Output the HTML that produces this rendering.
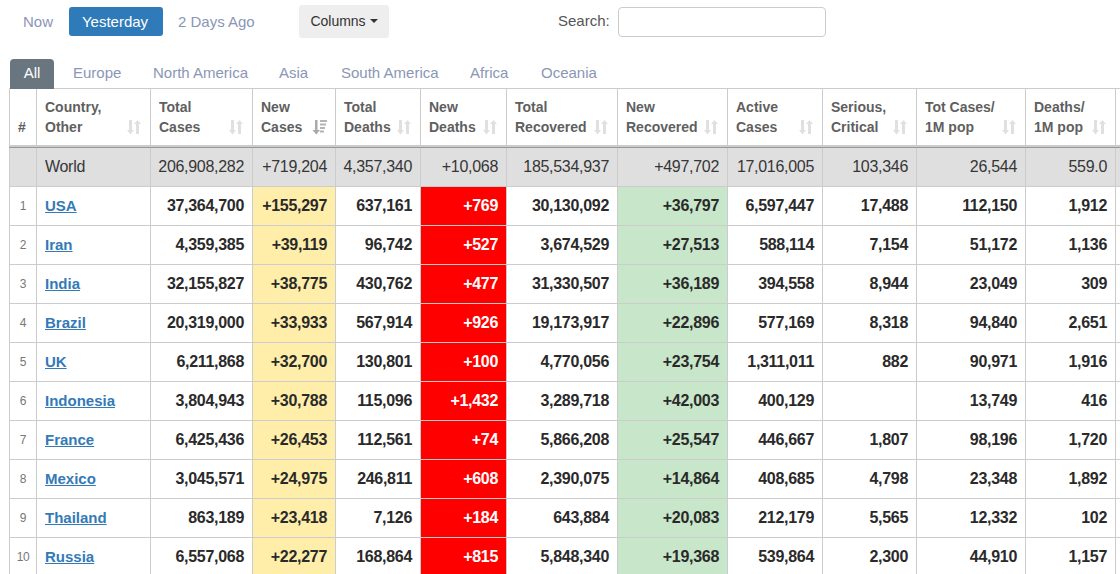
<!DOCTYPE html>
<html><head><meta charset="utf-8">
<style>
*{box-sizing:border-box;}
html,body{margin:0;padding:0;background:#fff;width:1120px;height:574px;overflow:hidden;font-family:"Liberation Sans",sans-serif;}
.abs{position:absolute;}
.nav{font-size:15px;color:#8a96b5;}
#btnY{left:69px;top:7px;width:94px;height:29px;background:#2f7ab8;text-indent:-2px;border-radius:3px;color:#fff;font-size:15px;text-align:center;line-height:29px;}
#now{left:23px;top:7px;line-height:29px;}
#d2{left:178px;top:7px;line-height:29px;}
#cols{left:299px;top:5px;width:90px;height:33px;background:#eee;border-radius:3px;font-size:14px;color:#333;text-align:center;line-height:33px;}
.caret{display:inline-block;width:0;height:0;border-left:4px solid transparent;border-right:4px solid transparent;border-top:4px solid #333;vertical-align:middle;margin-left:4px;margin-top:-2px;}
#slab{left:558px;top:11px;font-size:15px;color:#555;line-height:20px;}
#sinp{left:618px;top:7px;width:208px;height:30px;border:1px solid #ccc;border-radius:4px;}
.tabs{position:absolute;top:59px;left:10px;height:30px;font-size:15px;z-index:2;}
.tab{position:absolute;top:0;height:30px;line-height:28px;color:#8a96b5;white-space:nowrap;}
#tall{left:0;width:44px;background:#69757f;color:#fff;border-radius:4px 4px 0 0;text-align:center;}
table{position:absolute;left:9px;top:88px;width:1196px;border-collapse:collapse;table-layout:fixed;}
th,td{border:1px solid #ccc;padding:0 8px 0 0;}
th{height:58px;font-size:14px;color:#5f5f5f;font-weight:bold;text-align:left;vertical-align:bottom;padding:0 0 8px 8px;line-height:20px;position:relative;background:#fff;}
th.h{border-bottom:3px solid #ccc;}
td{height:39px;font-size:16px;font-weight:bold;color:#2a2a2a;text-align:right;letter-spacing:-0.3px;}
tr.w td{font-weight:normal;background:#dfdfdf;color:#363636;font-size:16px;height:40px;}
td.n{font-size:12px;font-weight:normal;color:#777;text-align:center;padding:0;}
td.c{text-align:left;padding-left:8px;}
td.c a{color:#337ab7;text-decoration:underline;font-size:15px;letter-spacing:0;}
td.y{background:#ffeeaa;}
td.r{background:#ff0000;color:#fff;}
td.g{background:#c8e6c9;}
.si{position:absolute;right:8px;top:31px;width:15px;height:15px;}
</style></head><body>
<div id="now" class="abs nav">Now</div>
<div id="btnY" class="abs">Yesterday</div>
<div id="d2" class="abs nav">2 Days Ago</div>
<div id="cols" class="abs">Columns<span class="caret"></span></div>
<div id="slab" class="abs">Search:</div>
<div id="sinp" class="abs"></div>
<div class="tabs">
<div class="tab" id="tall">All</div>
<div class="tab" style="left:63px">Europe</div>
<div class="tab" style="left:143px">North America</div>
<div class="tab" style="left:269px">Asia</div>
<div class="tab" style="left:331px">South America</div>
<div class="tab" style="left:460px">Africa</div>
<div class="tab" style="left:531px">Oceania</div>
</div>
<table>
<colgroup>
<col style="width:27px"><col style="width:114px"><col style="width:102px"><col style="width:83px"><col style="width:85px"><col style="width:86px"><col style="width:111px"><col style="width:110px"><col style="width:95px"><col style="width:94px"><col style="width:109px"><col style="width:90px"><col style="width:90px">
</colgroup>
<tr>
<th class="h">#</th>
<th class="h">Country,<br>Other<svg class="si" viewBox="0 0 15 15"><path d="M2 0h3v10h2l-3.5 4.5L0 10h2z M9 14V4H7l3.5-4L14 4h-2v10z" fill="#e0e0e0"/></svg></th>
<th class="h">Total<br>Cases<svg class="si" viewBox="0 0 15 15"><path d="M2 0h3v10h2l-3.5 4.5L0 10h2z M9 14V4H7l3.5-4L14 4h-2v10z" fill="#e0e0e0"/></svg></th>
<th class="h">New<br>Cases<svg class="si" viewBox="0 0 15 15"><path d="M3 0h2.5v10h2.5l-3.75 4.5L0.5 10h2.5z" fill="#aaa"/><path d="M8 0h7v2H8z M8 3.5h6v2H8z M8 7h5v2H8z M8 10.5h4v2H8z" fill="#b4b4b4"/></svg></th>
<th class="h">Total<br>Deaths<svg class="si" viewBox="0 0 15 15"><path d="M2 0h3v10h2l-3.5 4.5L0 10h2z M9 14V4H7l3.5-4L14 4h-2v10z" fill="#e0e0e0"/></svg></th>
<th class="h">New<br>Deaths<svg class="si" viewBox="0 0 15 15"><path d="M2 0h3v10h2l-3.5 4.5L0 10h2z M9 14V4H7l3.5-4L14 4h-2v10z" fill="#e0e0e0"/></svg></th>
<th class="h">Total<br>Recovered<svg class="si" viewBox="0 0 15 15"><path d="M2 0h3v10h2l-3.5 4.5L0 10h2z M9 14V4H7l3.5-4L14 4h-2v10z" fill="#e0e0e0"/></svg></th>
<th class="h">New<br>Recovered<svg class="si" viewBox="0 0 15 15"><path d="M2 0h3v10h2l-3.5 4.5L0 10h2z M9 14V4H7l3.5-4L14 4h-2v10z" fill="#e0e0e0"/></svg></th>
<th class="h">Active<br>Cases<svg class="si" viewBox="0 0 15 15"><path d="M2 0h3v10h2l-3.5 4.5L0 10h2z M9 14V4H7l3.5-4L14 4h-2v10z" fill="#e0e0e0"/></svg></th>
<th class="h">Serious,<br>Critical<svg class="si" viewBox="0 0 15 15"><path d="M2 0h3v10h2l-3.5 4.5L0 10h2z M9 14V4H7l3.5-4L14 4h-2v10z" fill="#e0e0e0"/></svg></th>
<th class="h">Tot&nbsp;Cases/<br>1M pop<svg class="si" viewBox="0 0 15 15"><path d="M2 0h3v10h2l-3.5 4.5L0 10h2z M9 14V4H7l3.5-4L14 4h-2v10z" fill="#e0e0e0"/></svg></th>
<th class="h">Deaths/<br>1M pop<svg class="si" viewBox="0 0 15 15"><path d="M2 0h3v10h2l-3.5 4.5L0 10h2z M9 14V4H7l3.5-4L14 4h-2v10z" fill="#e0e0e0"/></svg></th>
<th class="h">Total<br>Tests</th>
</tr>
<tr class="w"><td></td><td class="c">World</td><td>206,908,282</td><td>+719,204</td><td>4,357,340</td><td>+10,068</td><td>185,534,937</td><td>+497,702</td><td>17,016,005</td><td>103,346</td><td>26,544</td><td>559.0</td><td></td></tr>
<tr><td class="n">1</td><td class="c"><a>USA</a></td><td>37,364,700</td><td class="y">+155,297</td><td>637,161</td><td class="r">+769</td><td>30,130,092</td><td class="g">+36,797</td><td>6,597,447</td><td>17,488</td><td>112,150</td><td>1,912</td><td></td></tr>
<tr><td class="n">2</td><td class="c"><a>Iran</a></td><td>4,359,385</td><td class="y">+39,119</td><td>96,742</td><td class="r">+527</td><td>3,674,529</td><td class="g">+27,513</td><td>588,114</td><td>7,154</td><td>51,172</td><td>1,136</td><td></td></tr>
<tr><td class="n">3</td><td class="c"><a>India</a></td><td>32,155,827</td><td class="y">+38,775</td><td>430,762</td><td class="r">+477</td><td>31,330,507</td><td class="g">+36,189</td><td>394,558</td><td>8,944</td><td>23,049</td><td>309</td><td></td></tr>
<tr><td class="n">4</td><td class="c"><a>Brazil</a></td><td>20,319,000</td><td class="y">+33,933</td><td>567,914</td><td class="r">+926</td><td>19,173,917</td><td class="g">+22,896</td><td>577,169</td><td>8,318</td><td>94,840</td><td>2,651</td><td></td></tr>
<tr><td class="n">5</td><td class="c"><a>UK</a></td><td>6,211,868</td><td class="y">+32,700</td><td>130,801</td><td class="r">+100</td><td>4,770,056</td><td class="g">+23,754</td><td>1,311,011</td><td>882</td><td>90,971</td><td>1,916</td><td></td></tr>
<tr><td class="n">6</td><td class="c"><a>Indonesia</a></td><td>3,804,943</td><td class="y">+30,788</td><td>115,096</td><td class="r">+1,432</td><td>3,289,718</td><td class="g">+42,003</td><td>400,129</td><td></td><td>13,749</td><td>416</td><td></td></tr>
<tr><td class="n">7</td><td class="c"><a>France</a></td><td>6,425,436</td><td class="y">+26,453</td><td>112,561</td><td class="r">+74</td><td>5,866,208</td><td class="g">+25,547</td><td>446,667</td><td>1,807</td><td>98,196</td><td>1,720</td><td></td></tr>
<tr><td class="n">8</td><td class="c"><a>Mexico</a></td><td>3,045,571</td><td class="y">+24,975</td><td>246,811</td><td class="r">+608</td><td>2,390,075</td><td class="g">+14,864</td><td>408,685</td><td>4,798</td><td>23,348</td><td>1,892</td><td></td></tr>
<tr><td class="n">9</td><td class="c"><a>Thailand</a></td><td>863,189</td><td class="y">+23,418</td><td>7,126</td><td class="r">+184</td><td>643,884</td><td class="g">+20,083</td><td>212,179</td><td>5,565</td><td>12,332</td><td>102</td><td></td></tr>
<tr><td class="n">10</td><td class="c"><a>Russia</a></td><td>6,557,068</td><td class="y">+22,277</td><td>168,864</td><td class="r">+815</td><td>5,848,340</td><td class="g">+19,368</td><td>539,864</td><td>2,300</td><td>44,910</td><td>1,157</td><td></td></tr>
</table>
<div style="position:absolute;left:9px;top:147px;width:1111px;height:1px;background:#999"></div>
</body></html>
